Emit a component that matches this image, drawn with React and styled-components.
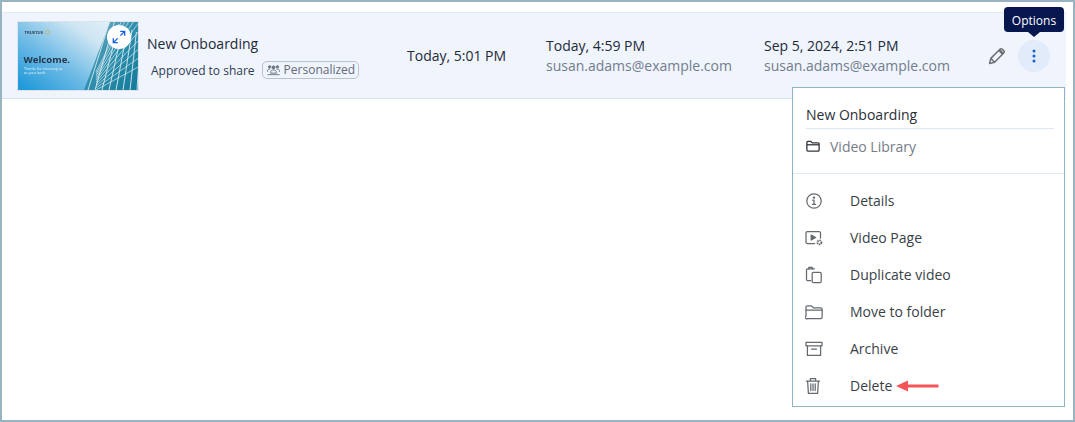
import React from "react";
import styled, { createGlobalStyle } from "styled-components";

const Global = createGlobalStyle`
  html, body { margin: 0; padding: 0; background: #fff; }
  * { box-sizing: border-box; }
  #root { font-family: "Open Sans", "Liberation Sans", sans-serif; }
`;

const Frame = styled.div`
  position: relative;
  width: 1075px;
  height: 422px;
  border: 2px solid #98b3c1;
  background: #fff;
  padding-top: 10px;
  overflow: hidden;
`;

const Row = styled.div`
  display: grid;
  grid-template-columns: 122px 268px 139px 218px 222px 1fr;
  align-items: center;
  width: 1064px;
  height: 87px;
  padding-left: 15px;
  background: #eff4fd;
  border-top: 1px solid #e0e9f8;
  border-bottom: 1px solid #d3e1f6;
  font-size: 14px;
  color: #232a38;
`;

const Thumb = styled.div`
  position: relative;
  width: 122px;
  height: 70px;
  border: 1px solid #dde3ea;
  overflow: hidden;
`;

const ThumbArt = styled.svg`
  display: block;
  width: 100%;
  height: 100%;
`;

const Expand = styled.div`
  position: absolute;
  top: 3px;
  right: 7px;
  width: 24px;
  height: 24px;
  border-radius: 50%;
  background: #fff;
  display: flex;
  align-items: center;
  justify-content: center;
`;

const NameCell = styled.div`
  padding: 2px 0 0 8px;
`;

const Name = styled.div`
  font-size: 14px;
  line-height: 20px;
  color: #232a38;
`;

const Meta = styled.div`
  display: flex;
  align-items: center;
  gap: 7px;
  margin-top: 7px;
  padding-left: 4px;
  font-size: 12px;
  color: #2f3d52;
`;

const Badge = styled.span`
  display: inline-flex;
  align-items: center;
  gap: 4px;
  height: 18px;
  padding: 0 3px 0 4px;
  border: 1px solid #bcc2cb;
  border-radius: 5px;
  color: #646b77;
  font-size: 12px;
  line-height: 16px;
`;

const DateCell = styled.div`
  line-height: 20px;
`;

const Email = styled.div`
  color: #737d8c;
  line-height: 20px;
`;

const Actions = styled.div`
  display: flex;
  align-items: center;
  gap: 12px;
  padding-left: 2px;
`;

const IconButton = styled.div`
  width: 32px;
  height: 32px;
  border-radius: 50%;
  display: flex;
  align-items: center;
  justify-content: center;
  background: ${(p) => (p.$active ? "#e1ebfa" : "transparent")};
`;

const Tooltip = styled.div`
  position: absolute;
  top: 5px;
  left: 1002px;
  width: 60px;
  height: 25px;
  background: #06174f;
  color: #fff;
  font-size: 12px;
  line-height: 27px;
  text-align: center;
  border-radius: 4px;
  &::after {
    content: "";
    position: absolute;
    left: 24px;
    bottom: -5px;
    border-left: 6px solid transparent;
    border-right: 6px solid transparent;
    border-top: 5px solid #06174f;
  }
`;

const Menu = styled.div`
  position: absolute;
  top: 85px;
  left: 790px;
  width: 273px;
  height: 320px;
  background: #fff;
  border: 1px solid #8fb4c6;
  display: flex;
  flex-direction: column;
`;

const MenuHead = styled.div`
  padding: 16px 10px 0 13px;
  border-bottom: 1px solid #dfe8f5;
  height: 86px;
`;

const MenuTitle = styled.div`
  font-size: 14px;
  line-height: 22px;
  height: 25px;
  color: #2a2f38;
  border-bottom: 1px solid #dfe8f5;
`;

const Folder = styled.div`
  display: flex;
  align-items: center;
  gap: 10px;
  height: 34px;
  font-size: 14px;
  color: #767c86;
`;

const Items = styled.div`
  padding-top: 8px;
  display: flex;
  flex-direction: column;
`;

const Item = styled.div`
  position: relative;
  display: flex;
  align-items: center;
  height: 37px;
  padding-left: 12px;
  font-size: 14px;
  color: #3a3f47;
`;

const ItemIcon = styled.span`
  display: flex;
  width: 18px;
  height: 18px;
  margin-right: 27px;
  align-items: center;
  justify-content: center;
`;

const Arrow = styled.svg`
  position: absolute;
  left: 103px;
  top: 12px;
`;

const S = { fill: "none", stroke: "#666a70", strokeWidth: 1.25, strokeLinecap: "round", strokeLinejoin: "round" };

const Svg = ({ children, w = 18, h = 18 }) => (
  <svg width={w} height={h} viewBox="0 0 18 18" {...S}>{children}</svg>
);

const icons = {
  info: (
    <Svg>
      <circle cx="9" cy="9" r="7.2" />
      <path d="M7.7 8.2H9v4M7.4 12.3h3.2" />
      <circle cx="9" cy="5.6" r=".6" fill="#666a70" />
    </Svg>
  ),
  page: (
    <Svg>
      <path d="M9.5 14.5H2.4A1.4 1.4 0 0 1 1 13.1V3.9A1.4 1.4 0 0 1 2.4 2.5h11.7A1.4 1.4 0 0 1 15.5 3.9V9" />
      <path d="M6.2 6 10.6 8.5 6.2 11Z" fill="#666a70" />
      <circle cx="14.4" cy="13.4" r="2" strokeWidth="1.9" strokeDasharray="1.4 .7" strokeLinecap="butt" />
    </Svg>
  ),
  dup: (
    <Svg>
      <path d="M5.8 14.5H2.6a1.1 1.1 0 0 1-1.1-1.1V4a1.1 1.1 0 0 1 1.1-1.1H9.4" />
      <path d="M3.8 2.9V1.3h3.4v1.6" />
      <rect x="7.2" y="6.4" width="9" height="10.2" rx="1.2" />
    </Svg>
  ),
  move: (
    <Svg>
      <path d="M1 4.2A1.3 1.3 0 0 1 2.3 2.9h4.2l1.8 1.9h7.4a1.4 1.4 0 0 1 1.4 1.4v8a1.4 1.4 0 0 1-1.4 1.4H2.3A1.3 1.3 0 0 1 1 13.2Z" />
      <path d="M1 7.2h16" />
    </Svg>
  ),
  archive: (
    <Svg>
      <rect x="1" y="2.4" width="16" height="3.4" />
      <path d="M2.4 5.8v9.6h13.2V5.8M6.6 9.2h4.8" />
    </Svg>
  ),
  trash: (
    <Svg>
      <path d="M1.4 4h13.2M5.4 3.8V1.6h5.2v2.2M2.6 4l.8 12.4h9.2L13.4 4M5.8 6.8v6.8M8 6.8v6.8M10.2 6.8v6.8" />
    </Svg>
  ),
};

const menu = [
  ["info", "Details"],
  ["page", "Video Page"],
  ["dup", "Duplicate video"],
  ["move", "Move to folder"],
  ["archive", "Archive"],
  ["trash", "Delete"],
];

function Artwork() {
  const lines = [];
  for (let i = 0; i < 10; i++) {
    lines.push(<path key={"a" + i} d={`M${70 + i * 7} 68 L${92 + i * 4.4} ${-2 + i * 2}`} stroke="#d9ebf1" strokeWidth=".9" />);
    lines.push(<path key={"b" + i} d={`M78 ${68 - i * 2} L122 ${44 - i * 9}`} stroke="#d9ebf1" strokeWidth=".7" />);
  }
  return (
    <ThumbArt viewBox="0 0 120 68" preserveAspectRatio="none">
      <defs>
        <linearGradient id="sky" x1="0" y1=".9" x2="1" y2=".1">
          <stop offset="0" stopColor="#229ad9" />
          <stop offset=".35" stopColor="#6fbbe6" />
          <stop offset=".7" stopColor="#cfe6f3" />
          <stop offset="1" stopColor="#e9f3f8" />
        </linearGradient>
        <linearGradient id="tower" x1="0" y1="0" x2="1" y2="1">
          <stop offset="0" stopColor="#7fb4c8" />
          <stop offset=".5" stopColor="#2f8fae" />
          <stop offset="1" stopColor="#147a9a" />
        </linearGradient>
        <filter id="soft"><feGaussianBlur stdDeviation=".25" /></filter>
      </defs>
      <g filter="url(#soft)">
        <rect width="120" height="68" fill="url(#sky)" />
        <path d="M66 68 L92 0 H120 V68 Z" fill="url(#tower)" />
        {lines}
        <text x="6.5" y="11.5" fontSize="4.2" fontWeight="700" fill="#33424f" fontFamily="Open Sans">TRUSTUS</text>
        <circle cx="29.5" cy="10.2" r="2" fill="none" stroke="#c9b35a" strokeWidth=".8" />
        <text x="5.5" y="41" fontSize="9.6" fontWeight="700" fill="#26354a" fontFamily="Open Sans">Welcome.</text>
        <text x="6" y="47.5" fontSize="3.6" fill="#e3f2fb" fontFamily="Open Sans">Thanks for choosing us</text>
        <text x="6" y="52" fontSize="3.6" fill="#e3f2fb" fontFamily="Open Sans">as your bank</text>
      </g>
    </ThumbArt>
  );
}

export default function App() {
  return (
    <>
      <Global />
      <Frame>
        <Row>
          <Thumb>
            <Artwork />
            <Expand>
              <svg width="14" height="14" viewBox="0 0 14 14" fill="none" stroke="#1163e6" strokeWidth="1.3">
                <path d="M8.2 1.3h4.5v4.5M12.5 1.5 8.4 5.6M5.8 12.7H1.3V8.2M1.5 12.5l4.1-4.1" />
              </svg>
            </Expand>
          </Thumb>
          <NameCell>
            <Name>New Onboarding</Name>
            <Meta>
              Approved to share
              <Badge>
                <svg width="13" height="12" viewBox="0 0 14 12" fill="none" stroke="#6b7280" strokeWidth="1">
                  <circle cx="7" cy="3.2" r="1.6" fill="#6b7280" />
                  <circle cx="2.8" cy="2.6" r="1.3" fill="#6b7280" />
                  <circle cx="11.2" cy="2.6" r="1.3" fill="#6b7280" />
                  <path d="M4 9.4V7.8C4 6.6 5.2 6 7 6s3 .6 3 1.8v1.6ZM.6 8V6.6C.6 5.6 1.6 5 3.6 5M13.4 8V6.6C13.4 5.6 12.4 5 10.4 5" />
                  <path d="M.5 11h13" />
                </svg>
                Personalized
              </Badge>
            </Meta>
          </NameCell>
          <DateCell>Today, 5:01 PM</DateCell>
          <DateCell>
            Today, 4:59 PM
            <Email>susan.adams@example.com</Email>
          </DateCell>
          <DateCell>
            Sep 5, 2024, 2:51 PM
            <Email>susan.adams@example.com</Email>
          </DateCell>
          <Actions>
            <svg width="18" height="18" viewBox="0 0 18 18" fill="none" stroke="#6c6f73" strokeWidth="1.5" strokeLinejoin="round">
              <path d="M1.6 16.4 2.8 11.4 11.9 2.3a1.8 1.8 0 0 1 2.5 0l1.3 1.3a1.8 1.8 0 0 1 0 2.5L6.6 15.2Z" />
              <path d="M11.2 3l3.8 3.8" strokeWidth="2.6" />
              <path d="M2.8 11.4l3.8 3.8" />
            </svg>
            <IconButton $active>
              <svg width="4" height="14" viewBox="0 0 4 14" fill="#1163c9">
                <circle cx="2" cy="2" r="1.5" />
                <circle cx="2" cy="7" r="1.5" />
                <circle cx="2" cy="12" r="1.5" />
              </svg>
            </IconButton>
          </Actions>
        </Row>
        <Tooltip>Options</Tooltip>
        <Menu>
          <MenuHead>
            <MenuTitle>New Onboarding</MenuTitle>
            <Folder>
              <svg width="14" height="14" viewBox="0 0 16 16" fill="none" stroke="#33373d" strokeWidth="1.5" strokeLinejoin="round">
                <path d="M1 4a1.2 1.2 0 0 1 1.2-1.2h3.4l1.5 1.6h6.7A1.2 1.2 0 0 1 15 5.6v7a1.2 1.2 0 0 1-1.2 1.2H2.2A1.2 1.2 0 0 1 1 12.6Z" />
                <path d="M1 6.6h14" />
              </svg>
              Video Library
            </Folder>
          </MenuHead>
          <Items>
            {menu.map(([icon, label]) => (
              <Item key={label}>
                <ItemIcon>{icons[icon]}</ItemIcon>
                {label}
                {label === "Delete" && (
                  <Arrow width="43" height="14" viewBox="0 0 43 14">
                    <path d="M0 7 12 1.5V5.5H42.5V8.5H12V12.5Z" fill="#f65558" />
                  </Arrow>
                )}
              </Item>
            ))}
          </Items>
        </Menu>
      </Frame>
    </>
  );
}
